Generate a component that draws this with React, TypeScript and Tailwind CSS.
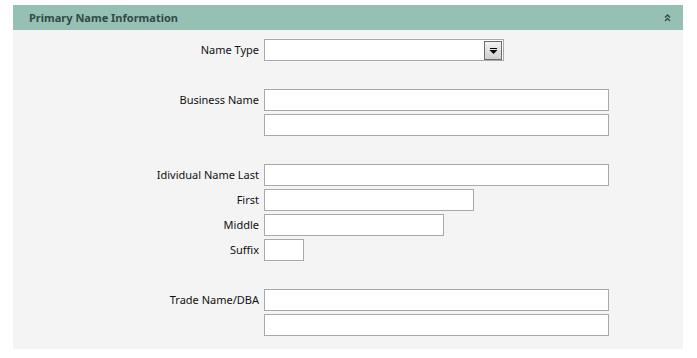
import React from "react";

const font = { fontFamily: "'Noto Sans', 'DejaVu Sans', sans-serif" };

function Field({ w }: { w: string }) {
  return <div className={`h-[22px] ${w} border border-[#a9a9a9] bg-white`} />;
}

function Row({ label, children }: { label?: string; children: React.ReactNode }) {
  return (
    <div className="flex items-center">
      <div className="w-[251px] pr-[5px] pb-[2px] text-right text-[11px] leading-none text-[#111] whitespace-nowrap">
        {label}
      </div>
      {children}
    </div>
  );
}

export default function App() {
  return (
    <div className="bg-white min-h-[358px] pt-[5px] px-[13px]" style={font}>
      <div className="w-[670px]">
        <div className="h-[25px] bg-[#97c0b5] flex items-center justify-between pl-[16px] pr-[12px] pt-[1px]">
          <span className="text-[11px] font-bold text-[#2e4a47]">Primary Name Information</span>
          <svg width="7" height="8" viewBox="0 0 7 8" className="text-[#2e4a47]">
            <path d="M1 3.5 L3.5 1 L6 3.5" fill="none" stroke="currentColor" strokeWidth="1.3" />
            <path d="M1 7 L3.5 4.5 L6 7" fill="none" stroke="currentColor" strokeWidth="1.3" />
          </svg>
        </div>
        <div className="bg-[#f4f4f4] pt-[9px] pb-[13px] flex flex-col gap-[28px]">
          <Row label="Name Type">
            <div className="h-[22px] w-[240px] border border-[#a9a9a9] bg-white flex justify-end items-start pt-[1px] pr-[1px]">
              <div className="w-[18px] h-[19px] border border-[#6b6b6b] bg-gradient-to-b from-[#f2f2f2] to-[#cfcfcf] flex items-center justify-center">
                <svg width="9" height="6" viewBox="0 0 9 6">
                  <rect x="1" y="0" width="7" height="1" fill="#000" />
                  <path d="M0.5 2 L8.5 2 L4.5 6 Z" fill="#000" />
                </svg>
              </div>
            </div>
          </Row>
          <div className="flex flex-col gap-[3px]">
            <Row label="Business Name"><Field w="w-[345px]" /></Row>
            <Row><Field w="w-[345px]" /></Row>
          </div>
          <div className="flex flex-col gap-[3px]">
            <Row label="Idividual Name Last"><Field w="w-[345px]" /></Row>
            <Row label="First"><Field w="w-[210px]" /></Row>
            <Row label="Middle"><Field w="w-[180px]" /></Row>
            <Row label="Suffix"><Field w="w-[40px]" /></Row>
          </div>
          <div className="flex flex-col gap-[3px]">
            <Row label="Trade Name/DBA"><Field w="w-[345px]" /></Row>
            <Row><Field w="w-[345px]" /></Row>
          </div>
        </div>
      </div>
    </div>
  );
}
